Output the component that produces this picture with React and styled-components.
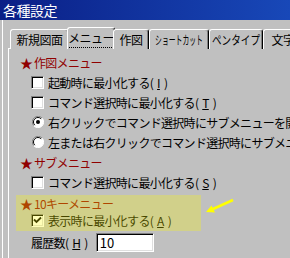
import React from 'react';
import styled, { createGlobalStyle } from 'styled-components';

const GlobalStyle = createGlobalStyle`
  html, body {
    margin: 0;
    padding: 0;
    background: #c0c0c0;
    overflow: hidden;
  }
  body {
    font-family: "Noto Sans CJK JP", "DejaVu Sans", sans-serif;
  }
`;

const Window = styled.div`
  position: relative;
  width: 290px;
  height: 258px;
  background: #c0c0c0;
  display: flex;
  flex-direction: column;
  overflow: hidden;
`;

const TitleBar = styled.div`
  flex: none;
  height: 20px;
  display: flex;
  align-items: center;
  padding-left: 3px;
  background: linear-gradient(to right, #0a1f86, #1848b8);
  color: #fff;
  font-size: 14px;
  letter-spacing: -0.5px;
`;

const Client = styled.div`
  flex: 1;
  min-height: 0;
  display: flex;
  flex-direction: column;
  padding: 7px 0 0 5px;
  margin-left: 2px;
  border-left: 1px solid #fff;
`;

const TabStrip = styled.div`
  flex: none;
  display: flex;
  align-items: flex-end;
  height: 22px;
  padding-left: 2px;
  margin-bottom: -1px;
  position: relative;
  z-index: 1;
`;

const Tab = styled.div`
  flex: none;
  box-sizing: border-box;
  width: ${p => p.$w}px;
  height: ${p => (p.$selected ? 22 : 20)}px;
  margin: 0 ${p => (p.$selected ? -2 : 0)}px;
  background: #c0c0c0;
  border: 1px solid;
  border-bottom: none;
  border-color: #fff #000 transparent #fff;
  border-radius: 3px 3px 0 0;
  box-shadow: inset -1px 0 #808080;
  display: flex;
  align-items: center;
  justify-content: center;
  font-size: 12px;
  letter-spacing: -0.5px;
  white-space: nowrap;
  overflow: hidden;
  color: #000;
  padding-bottom: ${p => (p.$selected ? 2 : 0)}px;
`;

// half-width katakana look, squeezed horizontally
const Narrow = styled.span`
  display: inline-block;
  letter-spacing: 0;
  transform: scaleX(${p => p.$scale});
`;

const FocusLabel = styled.span`
  outline: 1px dotted #000;
  outline-offset: 1px;
  padding: 0 2px;
`;

const Panel = styled.div`
  flex: 1;
  border-top: 1px solid #fff;
  border-left: 1px solid #fff;
  padding-top: 3px;
  display: flex;
  flex-direction: column;
  font-size: 12px;
  letter-spacing: -0.7px;
  color: #000;
`;

const Row = styled.div`
  display: flex;
  align-items: center;
  height: ${p => p.$h || 20}px;
  padding-left: ${p => p.$indent}px;
  gap: 4px;
  white-space: nowrap;
`;

const Heading = styled(Row)`
  color: #900000;
  gap: 1px;
`;

const Star = styled.span`
  font-size: 13px;
  letter-spacing: 0;
`;

const Check = styled.span`
  flex: none;
  box-sizing: border-box;
  width: 13px;
  height: 13px;
  background: #fff;
  border: 1px solid;
  border-color: #808080 #fff #fff #808080;
  box-shadow: inset 1px 1px #000, inset -1px -1px #dfdfdf;
  display: flex;
  align-items: center;
  justify-content: center;
`;

const RadioBox = styled.span`
  flex: none;
  width: 13px;
  height: 12px;
  display: flex;
  justify-content: center;
`;

const Highlight = styled.div`
  position: relative;
  margin: 3px 0 0 7px;
  width: 185px;
  padding-bottom: 1px;
  display: flex;
  flex-direction: column;
  &::after {
    content: '';
    position: absolute;
    inset: 0;
    background: rgba(255, 250, 0, 0.28);
    pointer-events: none;
  }
`;

const Field = styled.div`
  box-sizing: border-box;
  width: 58px;
  height: 19px;
  margin-left: 4px;
  background: #fff;
  border: 1px solid;
  border-color: #808080 #fff #fff #808080;
  box-shadow: inset 1px 1px #000, inset -1px -1px #dfdfdf;
  font-size: 13px;
  letter-spacing: 0;
  padding: 0 3px;
  display: flex;
  align-items: center;
`;

const Arrow = styled.svg`
  position: absolute;
  left: 200px;
  top: 195px;
`;

const CheckMark = () => (
  <svg width="9" height="9" viewBox="0 0 9 9">
    <path d="M1 3.5 L3.5 6 L8 1.5" stroke="#000" strokeWidth="1.8" fill="none" />
  </svg>
);

const Radio = ({ on }) => (
  <RadioBox>
    <svg width="12" height="12" viewBox="0 0 12 12">
      <circle cx="6" cy="6" r="5.5" fill="#fff" />
      <path d="M10.2 2.2 A5.5 5.5 0 0 0 1.8 9.8" stroke="#808080" fill="none" />
      <path d="M9.2 2.8 A4.5 4.5 0 0 0 2.8 9.2" stroke="#000" fill="none" />
      <path d="M1.8 9.8 A5.5 5.5 0 0 0 10.2 2.2" stroke="#fff" fill="none" />
      {on && <circle cx="6" cy="6" r="2" fill="#000" />}
    </svg>
  </RadioBox>
);

const tabs = [
  { label: '新規図面', w: 59 },
  { label: 'メニュー', w: 48, selected: true },
  { label: '作図', w: 36 },
  { label: 'ショートカット', w: 60, scale: 0.57 },
  { label: 'ペンタイプ', w: 54, scale: 0.8 },
  { label: '文字', w: 40 },
];

export default function App() {
  return (
    <Window>
      <GlobalStyle />
      <TitleBar>各種設定</TitleBar>
      <Client>
        <TabStrip>
          {tabs.map(t => (
            <Tab key={t.label} $w={t.w} $selected={t.selected}>
              {t.selected ? (
                <FocusLabel>{t.label}</FocusLabel>
              ) : t.scale ? (
                <Narrow $scale={t.scale}>{t.label}</Narrow>
              ) : (
                t.label
              )}
            </Tab>
          ))}
        </TabStrip>
        <Panel>
          <Heading $indent={11}><Star>★</Star>作図メニュー</Heading>
          <Row $indent={22}><Check />起動時に最小化する(<u>I</u>)</Row>
          <Row $indent={22}><Check />コマンド選択時に最小化する(<u>T</u>)</Row>
          <Row $indent={22}><Radio on />右クリックでコマンド選択時にサブメニューを開く</Row>
          <Row $indent={22}><Radio />左または右クリックでコマンド選択時にサブメニューを開く</Row>
          <Heading $indent={11}><Star>★</Star>サブメニュー</Heading>
          <Row $indent={22}><Check />コマンド選択時に最小化する(<u>S</u>)</Row>
          <Highlight>
            <Heading $indent={4} $h={16}><Star>★</Star>10キーメニュー</Heading>
            <Row $indent={15} $h={19}><Check><CheckMark /></Check>表示時に最小化する(<u>A</u>)</Row>
          </Highlight>
          <Row $indent={22} $h={21} style={{ marginTop: 1 }}>履歴数(<u>H</u>)<Field>10</Field></Row>
        </Panel>
      </Client>
      <Arrow width="40" height="25" viewBox="0 0 40 25">
        <line x1="33" y1="5" x2="13" y2="14" stroke="#ffff00" strokeWidth="2.5" />
        <polygon points="6,17 15,17.5 11.5,10.5" fill="#ffff00" />
      </Arrow>
    </Window>
  );
}
